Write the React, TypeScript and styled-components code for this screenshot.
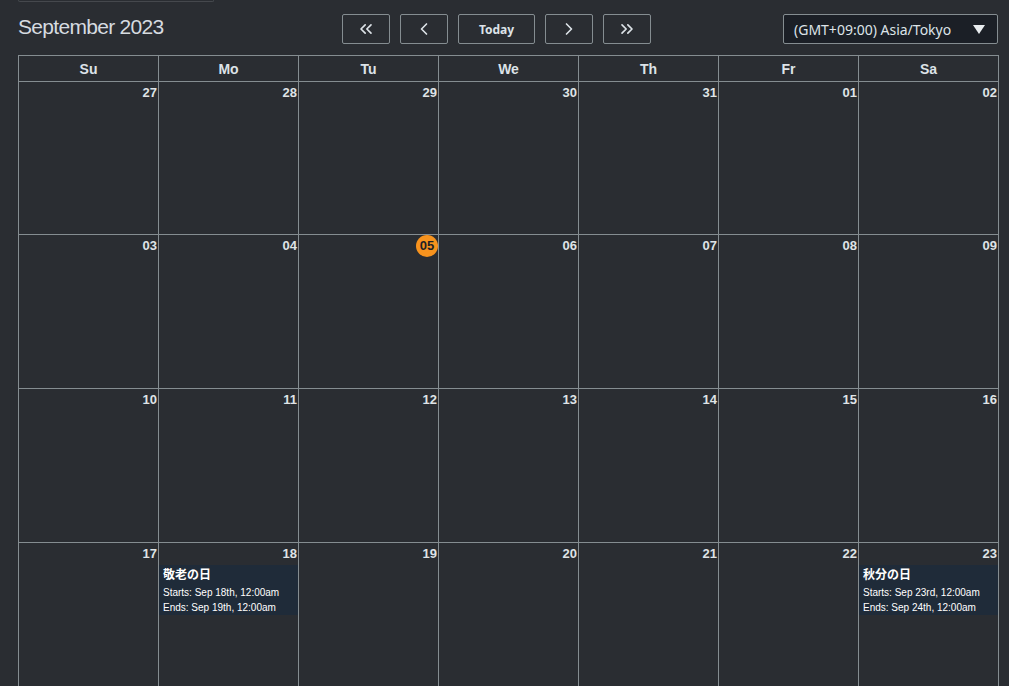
import React from "react";
import styled, { createGlobalStyle } from "styled-components";
import { ChevronsLeft, ChevronLeft, ChevronRight, ChevronsRight } from "lucide-react";

const Global = createGlobalStyle`
  html, body { margin: 0; padding: 0; background: #2a2d32; }
  body { font-family: "Liberation Sans", Arial, sans-serif; color: #dde3e8; overflow: hidden; }
`;

const Page = styled.div`
  width: 981px;
  margin-left: 18px;
  height: 686px;
  overflow: hidden;
`;

const TopStub = styled.div`
  width: 194px;
  height: 1px;
  border: 1px solid #45484d;
  border-top: none;
  border-radius: 0 0 3px 3px;
`;

const Toolbar = styled.div`
  display: flex;
  align-items: center;
  margin-top: 11px;
  height: 32px;
  margin-bottom: 10px;
`;

const Title = styled.h2`
  flex: 0 0 324px;
  margin: 0;
  font-family: "Liberation Sans", Arial, sans-serif;
  font-weight: 400;
  font-size: 21px;
  letter-spacing: -0.7px;
  color: #d6dbe0;
  position: relative;
  top: -2px;
`;

const NavGroup = styled.div`
  display: flex;
  gap: 10px;
`;

const NavButton = styled.button<{ $w: number }>`
  width: ${(p) => p.$w}px;
  height: 30px;
  display: flex;
  align-items: center;
  justify-content: center;
  background: transparent;
  border: 1px solid #858d91;
  border-radius: 2px;
  color: #dde3e8;
  font-family: "Noto Sans", "Open Sans", sans-serif;
  font-weight: 700;
  font-size: 12px;
  padding: 0;
  cursor: pointer;
`;

const Select = styled.div`
  margin-left: auto;
  margin-right: 1px;
  width: 215px;
  height: 30px;
  box-sizing: border-box;
  background: #1b1f26;
  border: 1px solid #858d91;
  border-radius: 2px;
  display: flex;
  align-items: center;
  justify-content: space-between;
  padding: 0 12px 0 10px;
  font-family: "Noto Sans", "Open Sans", sans-serif;
  font-size: 14px;
  color: #dde3e8;
`;

const Caret = styled.span`
  width: 0;
  height: 0;
  border-left: 6px solid transparent;
  border-right: 6px solid transparent;
  border-top: 9px solid #e8ecef;
`;

const Grid = styled.div`
  display: grid;
  grid-template-columns: repeat(7, 140px);
  grid-template-rows: 26px 153px 154px 154px 154px;
  border-left: 1px solid #858d91;
  border-top: 1px solid #858d91;
`;

const HeadCell = styled.div`
  border-right: 1px solid #858d91;
  border-bottom: 1px solid #858d91;
  display: flex;
  align-items: center;
  justify-content: center;
  font-weight: 700;
  font-size: 14px;
  color: #dde3e8;
`;

const DayCell = styled.div`
  border-right: 1px solid #858d91;
  border-bottom: 1px solid #858d91;
  display: flex;
  flex-direction: column;
  min-width: 0;
`;

const NumRow = styled.div`
  display: flex;
  justify-content: flex-end;
  height: 22px;
`;

const DayNum = styled.span<{ $today?: boolean }>`
  height: 22px;
  line-height: 22px;
  font-weight: 700;
  font-size: 13px;
  color: ${(p) => (p.$today ? "#1d2126" : "#dfe3e6")};
  background: ${(p) => (p.$today ? "#f7931e" : "transparent")};
  border-radius: 11px;
  min-width: ${(p) => (p.$today ? "22px" : "0")};
  text-align: center;
  padding: ${(p) => (p.$today ? "0" : "0 1px 0 0")};
`;

const Event = styled.div`
  background: #1f2b39;
  height: 50px;
  box-sizing: border-box;
  padding: 2px 4px 0;
  color: #ffffff;
`;

const EventTitle = styled.div`
  font-family: "Liberation Sans", "Noto Sans CJK JP", sans-serif;
  font-weight: 700;
  font-size: 12px;
  line-height: 16px;
  margin-bottom: 2px;
`;

const EventLine = styled.div`
  font-family: "Liberation Sans", Arial, sans-serif;
  font-size: 10px;
  line-height: 15px;
`;

const days = ["Su", "Mo", "Tu", "We", "Th", "Fr", "Sa"];
const nums = [
  "27", "28", "29", "30", "31", "01", "02",
  "03", "04", "05", "06", "07", "08", "09",
  "10", "11", "12", "13", "14", "15", "16",
  "17", "18", "19", "20", "21", "22", "23",
];

const events: Record<number, { title: string; starts: string; ends: string }> = {
  22: { title: "敬老の日", starts: "Starts: Sep 18th, 12:00am", ends: "Ends: Sep 19th, 12:00am" },
  27: { title: "秋分の日", starts: "Starts: Sep 23rd, 12:00am", ends: "Ends: Sep 24th, 12:00am" },
};

export default function App() {
  return (
    <>
      <Global />
      <Page>
        <TopStub />
        <Toolbar>
          <Title>September 2023</Title>
          <NavGroup>
            <NavButton $w={48}><ChevronsLeft size={20} strokeWidth={2} /></NavButton>
            <NavButton $w={48}><ChevronLeft size={20} strokeWidth={2} /></NavButton>
            <NavButton $w={77}>Today</NavButton>
            <NavButton $w={48}><ChevronRight size={20} strokeWidth={2} /></NavButton>
            <NavButton $w={48}><ChevronsRight size={20} strokeWidth={2} /></NavButton>
          </NavGroup>
          <Select>
            <span>(GMT+09:00) Asia/Tokyo</span>
            <Caret />
          </Select>
        </Toolbar>
        <Grid>
          {days.map((d) => (
            <HeadCell key={d}>{d}</HeadCell>
          ))}
          {nums.map((n, i) => {
            const ev = events[i];
            return (
              <DayCell key={i}>
                <NumRow>
                  <DayNum $today={i === 9}>{n}</DayNum>
                </NumRow>
                {ev && (
                  <Event>
                    <EventTitle>{ev.title}</EventTitle>
                    <EventLine>{ev.starts}</EventLine>
                    <EventLine>{ev.ends}</EventLine>
                  </Event>
                )}
              </DayCell>
            );
          })}
        </Grid>
      </Page>
    </>
  );
}
